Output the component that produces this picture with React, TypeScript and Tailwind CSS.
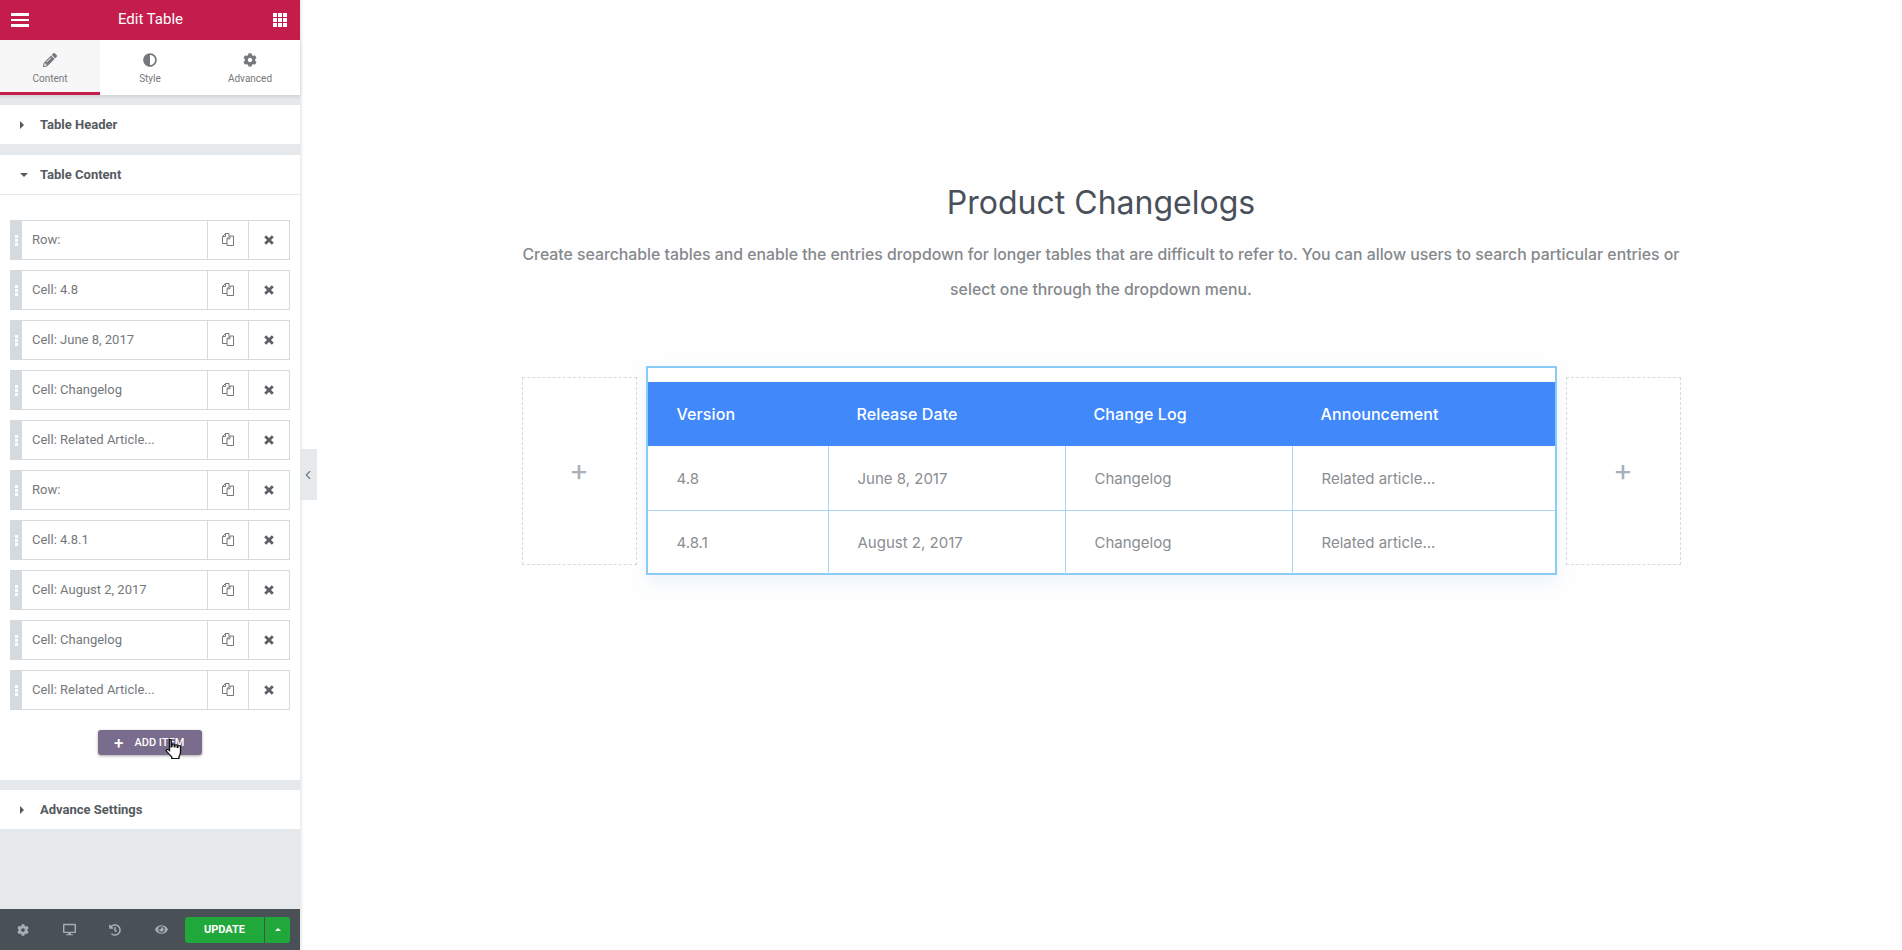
import { ChevronLeft } from 'lucide-react';
import { FaCog, FaDesktop, FaEye, FaHistory, FaPencilAlt, FaAdjust } from 'react-icons/fa';

const items = [
  'Row:',
  'Cell: 4.8',
  'Cell: June 8, 2017',
  'Cell: Changelog',
  'Cell: Related Article...',
  'Row:',
  'Cell: 4.8.1',
  'Cell: August 2, 2017',
  'Cell: Changelog',
  'Cell: Related Article...',
];

const rows = [
  ['4.8', 'June 8, 2017', 'Changelog', 'Related article...'],
  ['4.8.1', 'August 2, 2017', 'Changelog', 'Related article...'],
];

const colClasses = ['w-[180px]', 'w-[237px]', 'w-[227px]', 'flex-1'];

function Caret({ open }: { open?: boolean }) {
  return open ? (
    <span className="h-0 w-0 border-x-[4px] border-t-[4px] border-x-transparent border-t-[#555a5f]" />
  ) : (
    <span className="h-0 w-0 border-y-[4px] border-l-[4px] border-y-transparent border-l-[#555a5f]" />
  );
}

function SectionHead({ label, open }: { label: string; open?: boolean }) {
  return (
    <div className={`flex items-center bg-white pl-[20px] ${open ? 'h-[40px] border-b border-[#e6e9ec]' : 'h-[39px]'}`}>
      <span className="flex w-[20px] items-center">
        <Caret open={open} />
      </span>
      <span className="text-[13px] font-bold text-[#555a5f]">{label}</span>
    </div>
  );
}

function CopyIcon() {
  return (
    <svg className="mb-[1px]" width="14" height="15" viewBox="0 0 14 15" fill="none" stroke="#74787c" strokeWidth="1">
      <path d="M6 11.5H1.5V4.5L4.5 1.5H8V4" />
      <path d="M1.5 4.5H4.5V1.5" />
      <path d="M6 13.5V6.5L9 4H12.5V13.5Z" fill="#fff" />
      <path d="M6 6.8H9V4" />
    </svg>
  );
}

function CloseIcon() {
  return (
    <svg width="10" height="10" viewBox="0 0 10 10" fill="none" stroke="#5d6166" strokeWidth="2.8">
      <path d="M1.2 1.2L8.8 8.8M8.8 1.2L1.2 8.8" />
    </svg>
  );
}

function RepeaterItem({ label }: { label: string }) {
  return (
    <div className="flex h-[40px] border border-[#d5dadf] bg-white">
      <div className="flex w-[11px] flex-col items-center justify-center gap-[1px] bg-[#d5dadf]">
        <span className="h-[3px] w-[3px] bg-white" />
        <span className="h-[3px] w-[3px] bg-white" />
        <span className="h-[3px] w-[3px] bg-white" />
      </div>
      <div className="flex flex-1 items-center pl-[10px] text-[13px] text-[#74787c]">{label}</div>
      <div className="flex w-[41px] items-center justify-center border-l border-[#d5dadf]">
        <CopyIcon />
      </div>
      <div className="flex w-[41px] items-center justify-center border-l border-[#d5dadf]">
        <CloseIcon />
      </div>
    </div>
  );
}

function HandCursor() {
  return (
    <svg className="absolute top-[8px] left-[67px]" width="18" height="22" viewBox="0 0 16 24" preserveAspectRatio="none">
      <path
        d="M4 1.5c1 0 1.6.7 1.6 1.7v6.5l.6-.2V7.6c0-1.4 2-1.4 2 0v2l.6.1V8.3c0-1.3 2-1.3 2 0v1.9l.6.2V9.3c0-1.3 2.4-1.3 2.4.3v5.6c0 2.6-.6 3.6-1.4 5.3v1.8H6v-1.8c-1.6-1.9-3.4-4.2-4.6-6-.9-1.4.6-2.7 1.7-1.7l.9 1V3.2c0-1 0-1.7 0-1.7z"
        fill="#fff"
        stroke="#111"
        strokeWidth="1.2"
      />
    </svg>
  );
}

function Sidebar() {
  return (
    <aside className="relative z-10 flex h-[950px] w-[300px] shrink-0 flex-col bg-[#e6e9ec] font-['Roboto',sans-serif] shadow-[1px_0_3px_rgba(0,0,0,0.12)]">
      <header className="flex h-[40px] items-center justify-between bg-[#c41d4c] pr-[13px] pl-[11px] text-white">
        <div className="flex w-[18px] flex-col gap-[3px]">
          <span className="h-[2.5px] bg-white" />
          <span className="h-[2.5px] bg-white" />
          <span className="h-[2.5px] bg-white" />
        </div>
        <span className="pr-[1px] pb-[2px] text-[15px] font-normal">Edit Table</span>
        <div className="grid w-[14px] grid-cols-3 gap-[1px]">
          {Array.from({ length: 9 }).map((_, i) => (
            <span key={i} className="h-[4px] bg-white" />
          ))}
        </div>
      </header>

      <nav className="flex h-[55px] bg-white text-[#74787c] shadow-[0_2px_3px_rgba(0,0,0,0.1)]">
        <div className="flex w-[100px] flex-col items-center border-b-[3px] border-[#c41d4c] bg-[#f7f7f7] pt-[13px]">
          <FaPencilAlt size={14} />
          <span className="mt-[6px] text-[10px] leading-[12px]">Content</span>
        </div>
        <div className="flex w-[100px] flex-col items-center pt-[13px]">
          <FaAdjust size={14} />
          <span className="mt-[6px] text-[10px] leading-[12px]">Style</span>
        </div>
        <div className="flex w-[100px] flex-col items-center pt-[13px]">
          <FaCog size={14} />
          <span className="mt-[6px] text-[10px] leading-[12px]">Advanced</span>
        </div>
      </nav>

      <div className="mt-[10px]">
        <SectionHead label="Table Header" />
      </div>

      <div className="mt-[11px] bg-white">
        <SectionHead label="Table Content" open />
        <div className="flex flex-col gap-[10px] px-[10px] pt-[25px]">
          {items.map((label, i) => (
            <RepeaterItem key={i} label={label} />
          ))}
        </div>
        <div className="flex justify-center pt-[20px] pb-[25px]">
          <div className="relative flex h-[25px] w-[104px] items-center gap-[11px] rounded-[3px] bg-[#7a6c8c] pt-[1px] pl-[16px] text-[11px] font-medium text-white shadow-[0_1px_3px_rgba(0,0,0,0.35)]">
            <span className="text-[17px] leading-none">+</span>
            <span>ADD ITEM</span>
            <HandCursor />
          </div>
        </div>
      </div>

      <div className="mt-[10px]">
        <SectionHead label="Advance Settings" />
      </div>

      <footer className="mt-auto flex h-[41px] items-center bg-[#495157] pr-[9px] text-[#a4afb7]">
        <div className="flex w-[46px] justify-center">
          <FaCog size={12} />
        </div>
        <div className="flex w-[46px] justify-center">
          <FaDesktop size={13} />
        </div>
        <div className="flex w-[46px] justify-center">
          <FaHistory size={12} />
        </div>
        <div className="flex w-[47px] justify-center">
          <FaEye size={13} />
        </div>
        <div className="flex h-[26px] w-[79px] items-center justify-center rounded-l-[3px] bg-[#20a83a] pt-[1px] text-[11px] font-bold text-white">
          UPDATE
        </div>
        <div className="ml-[1px] flex h-[26px] w-[25px] items-center justify-center rounded-r-[3px] bg-[#20a83a]">
          <span className="h-0 w-0 border-x-[3px] border-b-[3px] border-x-transparent border-b-white" />
        </div>
      </footer>

      <div className="absolute top-[449px] left-[300px] flex h-[51px] w-[17px] items-center justify-center pr-[2px] bg-[#e6e9ec] text-[#6d7882]">
        <ChevronLeft size={14} />
      </div>
    </aside>
  );
}

function DropZone() {
  return (
    <div className="flex h-[188px] w-[115px] items-center justify-center border border-dashed border-[#d5dadf] bg-white pb-[2px] text-[30px] leading-none font-normal text-[#a9b0b8]">
      +
    </div>
  );
}

function ChangelogTable() {
  return (
    <div className="h-[209px] w-[911px] border-2 border-[#8accf8] bg-white pt-[14px] shadow-[0_8px_16px_rgba(90,160,220,0.1)]">
      <div className="flex h-[64px] items-center bg-[#4188fb] text-[16px] font-medium tracking-[0.1px] text-white">
        <span className="w-[180px] pl-[29px]">Version</span>
        <span className="w-[237px] pl-[29px]">Release Date</span>
        <span className="w-[227px] pl-[29px]">Change Log</span>
        <span className="flex-1 pl-[29px]">Announcement</span>
      </div>
      {rows.map((row, r) => (
        <div key={r} className={`flex h-[64px] text-[15px] text-[#8a8d91] ${r > 0 ? 'border-t border-[#a9d6f8]' : ''}`}>
          {row.map((cell, c) => (
            <div
              key={c}
              className={`flex items-center pt-[2px] pl-[29px] ${colClasses[c]} ${c > 0 ? 'border-l border-[#a9d6f8]' : ''}`}
            >
              {cell}
            </div>
          ))}
        </div>
      ))}
    </div>
  );
}

export default function App() {
  return (
    <div className="flex h-[950px] w-[1902px] overflow-hidden bg-[#fefefe]">
      <Sidebar />
      <main className="flex flex-1 flex-col items-center pt-[183px] font-['Inter',sans-serif]">
        <h1 className="text-[32px] leading-[40px] font-normal text-[#4a505a]">Product Changelogs</h1>
        <p className="mt-[14px] w-[1200px] text-center text-[15.8px] leading-[35px] font-medium text-[#85888c]">
          Create searchable tables and enable the entries dropdown for longer tables that are difficult to refer to. You can allow users to search particular entries or
          <br />
          select one through the dropdown menu.
        </p>
        <div className="mt-[59px] flex items-start gap-[9px]">
          <div className="pt-[11px]">
            <DropZone />
          </div>
          <ChangelogTable />
          <div className="pt-[11px]">
            <DropZone />
          </div>
        </div>
      </main>
    </div>
  );
}
